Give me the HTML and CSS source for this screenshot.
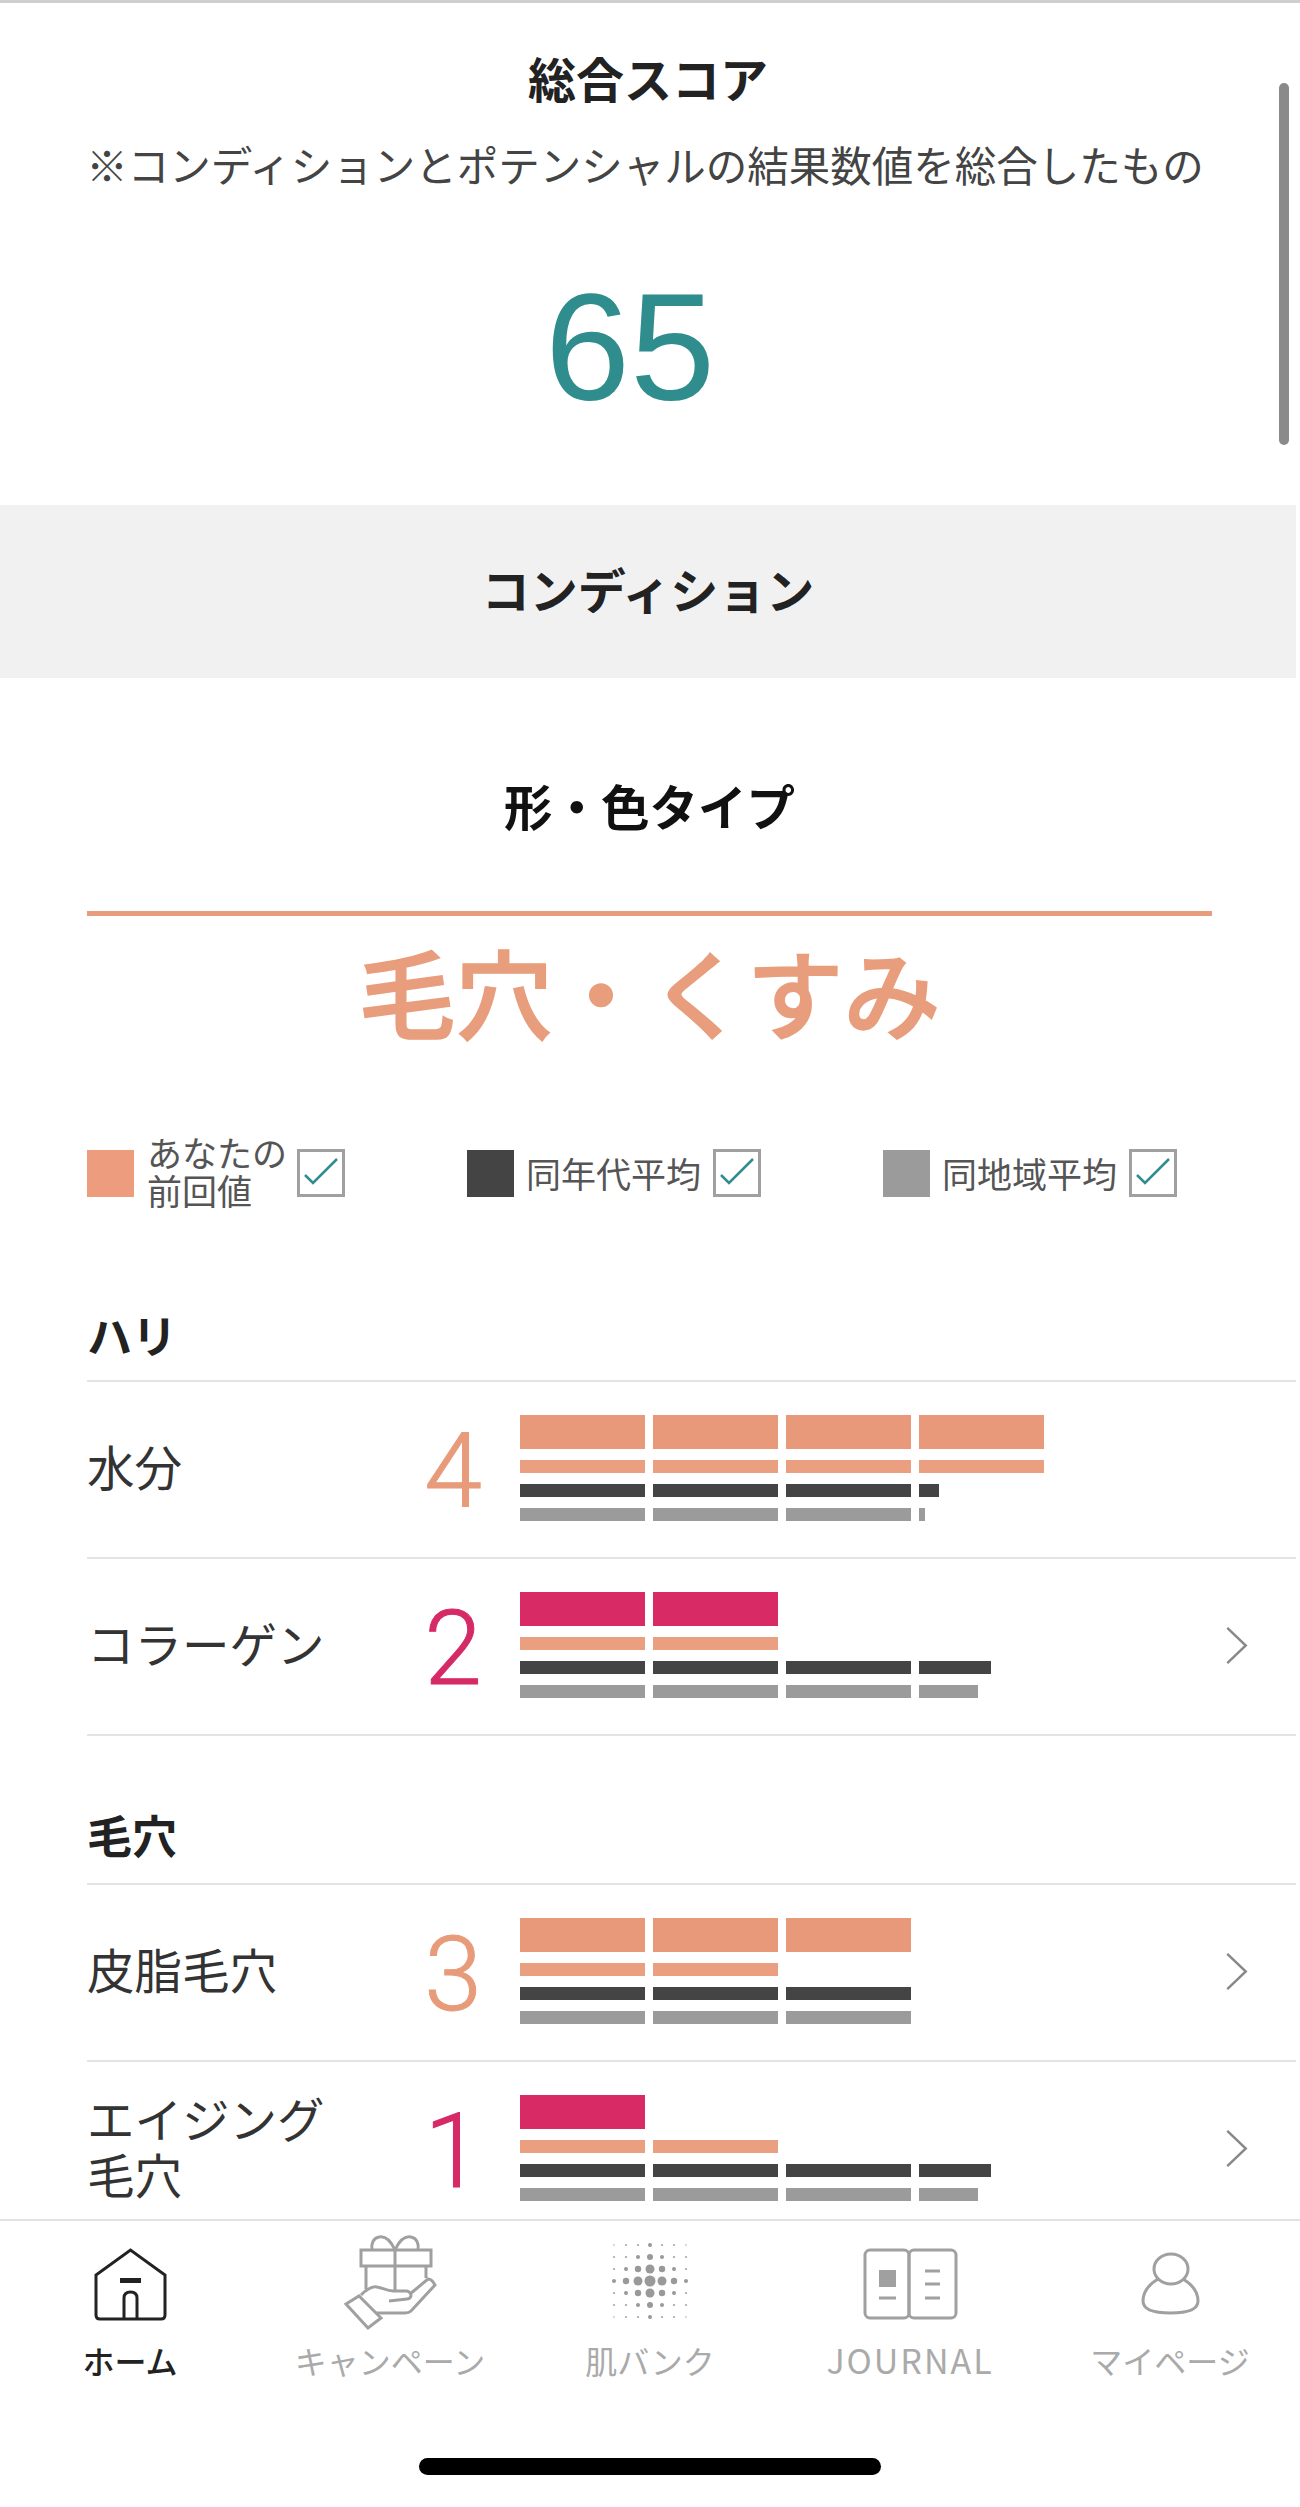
FILE: index.html
```html
<!DOCTYPE html>
<html lang="ja">
<head>
<meta charset="utf-8">
<title>総合スコア</title>
<link rel="stylesheet" href="styles.css">
</head>
<body>
<div class="page">
  <main class="main">
    <section class="score">
      <h1 class="score-title">総合スコア</h1>
      <p class="score-note">※コンディションとポテンシャルの結果数値を総合したもの</p>
      <div class="score-value">65</div>
    </section>
    <h2 class="band">コンディション</h2>
    <section class="type">
      <h3 class="type-label">形・色タイプ</h3>
      <div class="type-name">毛穴・くすみ</div>
      <div class="legend">
        <div class="legend-item">
          <span class="swatch peach"></span>
          <span class="legend-text legend-text-short">あなたの<br>前回値</span>
          <span class="check"><svg viewBox="0 0 42 42"><path d="M5 23 L13 31 L37 7"/></svg></span>
        </div>
        <div class="legend-item">
          <span class="swatch dark"></span>
          <span class="legend-text">同年代平均</span>
          <span class="check"><svg viewBox="0 0 42 42"><path d="M5 23 L13 31 L37 7"/></svg></span>
        </div>
        <div class="legend-item">
          <span class="swatch grey"></span>
          <span class="legend-text">同地域平均</span>
          <span class="check"><svg viewBox="0 0 42 42"><path d="M5 23 L13 31 L37 7"/></svg></span>
        </div>
      </div>
    </section>

    <section class="group group-hari">
      <h4 class="group-title">ハリ</h4>
      <div class="row">
        <div class="row-label">水分</div>
        <div class="row-num peach-text">4</div>
        <div class="bars">
          <div class="bar big peach"><i></i><i></i><i></i><i></i></div>
          <div class="bar peach"><i></i><i></i><i></i><i></i></div>
          <div class="bar dark"><i></i><i></i><i></i><i style="width:20px"></i></div>
          <div class="bar grey"><i></i><i></i><i></i><i style="width:6px"></i></div>
        </div>
      </div>
      <div class="row">
        <div class="row-label">コラーゲン</div>
        <div class="row-num pink-text">2</div>
        <div class="bars">
          <div class="bar big pink"><i></i><i></i></div>
          <div class="bar peach"><i></i><i></i></div>
          <div class="bar dark"><i></i><i></i><i></i><i style="width:72px"></i></div>
          <div class="bar grey"><i></i><i></i><i></i><i style="width:59px"></i></div>
        </div>
        <svg class="chevron" viewBox="0 0 24 38"><path d="M2 1 L21 19 L2 37"/></svg>
      </div>
    </section>

    <section class="group group-keana">
      <h4 class="group-title">毛穴</h4>
      <div class="row">
        <div class="row-label">皮脂毛穴</div>
        <div class="row-num peach-text">3</div>
        <div class="bars">
          <div class="bar big peach"><i></i><i></i><i></i></div>
          <div class="bar peach"><i></i><i></i></div>
          <div class="bar dark"><i></i><i></i><i></i></div>
          <div class="bar grey"><i></i><i></i><i></i></div>
        </div>
        <svg class="chevron" viewBox="0 0 24 38"><path d="M2 1 L21 19 L2 37"/></svg>
      </div>
      <div class="row row-last">
        <div class="row-label">エイジング<br>毛穴</div>
        <div class="row-num pink-text">1</div>
        <div class="bars">
          <div class="bar big pink"><i></i></div>
          <div class="bar peach"><i></i><i></i></div>
          <div class="bar dark"><i></i><i></i><i></i><i style="width:72px"></i></div>
          <div class="bar grey"><i></i><i></i><i></i><i style="width:59px"></i></div>
        </div>
        <svg class="chevron" viewBox="0 0 24 38"><path d="M2 1 L21 19 L2 37"/></svg>
      </div>
    </section>
  </main>

  <nav class="nav">
    <div class="tabs">
      <div class="tab active">
        <svg class="tab-icon" viewBox="0 0 100 100">
          <path d="M20 88 Q16 88 16 84 V44 L50.5 19 L85 44 V84 Q85 88 81 88 Z"/>
          <path class="solid" d="M40 47 H61 V52 H40 Z"/>
          <path d="M44 88 V67 Q44 61 50.5 61 Q57 61 57 67 V88"/>
        </svg>
        <span class="tab-label">ホーム</span>
      </div>
      <div class="tab">
        <svg class="tab-icon" viewBox="0 0 100 100">
          <path d="M55 19 C50 8 44 5 39 6 C33 7 31 13 32 19"/>
          <path d="M55 19 C60 8 66 5 71 6 C77 7 79 13 78 19"/>
          <path d="M21 19 H91 V35 H21 Z"/>
          <path d="M26 35 V58 M86 35 V47 M55 19 V60"/>
          <path d="M6 73 L19 65 L41 87 L28 97 Z"/>
          <path d="M21 64 C27 58 32 55 37 56 C43 57 47 60 53 60 L67 60 Q71 61 71 65 Q70 68 67 68 L49 70"/>
          <path d="M70 63 L88 48 Q92 48 95 54 L71 80 Q69 82 65 82 L36 82"/>
        </svg>
        <span class="tab-label">キャンペーン</span>
      </div>
      <div class="tab">
        <svg class="tab-icon halftone" viewBox="0 0 100 100">
          <g>
            <circle cx="14" cy="14" r="0.7"/><circle cx="26" cy="14" r="0.9"/><circle cx="38" cy="14" r="1"/><circle cx="50" cy="14" r="2"/><circle cx="62" cy="14" r="1"/><circle cx="74" cy="14" r="0.9"/><circle cx="86" cy="14" r="0.7"/>
            <circle cx="14" cy="26" r="0.9"/><circle cx="26" cy="26" r="1"/><circle cx="38" cy="26" r="2"/><circle cx="50" cy="26" r="3"/><circle cx="62" cy="26" r="2"/><circle cx="74" cy="26" r="1"/><circle cx="86" cy="26" r="0.9"/>
            <circle cx="14" cy="38" r="1"/><circle cx="26" cy="38" r="2"/><circle cx="38" cy="38" r="3.2"/><circle cx="50" cy="38" r="4.5"/><circle cx="62" cy="38" r="3.2"/><circle cx="74" cy="38" r="2"/><circle cx="86" cy="38" r="1"/>
            <circle cx="14" cy="50" r="2"/><circle cx="26" cy="50" r="3.2"/><circle cx="38" cy="50" r="4.5"/><circle cx="50" cy="50" r="5.5"/><circle cx="62" cy="50" r="4.5"/><circle cx="74" cy="50" r="3.2"/><circle cx="86" cy="50" r="2"/>
            <circle cx="14" cy="62" r="1"/><circle cx="26" cy="62" r="2"/><circle cx="38" cy="62" r="3.2"/><circle cx="50" cy="62" r="4.5"/><circle cx="62" cy="62" r="3.2"/><circle cx="74" cy="62" r="2"/><circle cx="86" cy="62" r="1"/>
            <circle cx="14" cy="74" r="0.9"/><circle cx="26" cy="74" r="1"/><circle cx="38" cy="74" r="2"/><circle cx="50" cy="74" r="3"/><circle cx="62" cy="74" r="2"/><circle cx="74" cy="74" r="1"/><circle cx="86" cy="74" r="0.9"/>
            <circle cx="14" cy="86" r="0.7"/><circle cx="26" cy="86" r="0.9"/><circle cx="38" cy="86" r="1"/><circle cx="50" cy="86" r="2"/><circle cx="62" cy="86" r="1"/><circle cx="74" cy="86" r="0.9"/><circle cx="86" cy="86" r="0.7"/>
          </g>
        </svg>
        <span class="tab-label">肌バンク</span>
      </div>
      <div class="tab">
        <svg class="tab-icon" viewBox="0 0 100 100">
          <rect x="5" y="19" width="44" height="68" rx="5"/>
          <rect x="49" y="19" width="47" height="68" rx="5"/>
          <path class="solid" d="M19 39 H36 V56 H19 Z"/>
          <path d="M19 67 H36 M65 40 H80 M65 53 H80 M65 67 H80"/>
        </svg>
        <span class="tab-label tab-label-latin">JOURNAL</span>
      </div>
      <div class="tab">
        <svg class="tab-icon" viewBox="0 0 100 100">
          <ellipse cx="51" cy="38" rx="17" ry="15"/>
          <path d="M38 48 C28 54 23 62 23 70 C23 79 36 82 50.5 82 C65 82 78 79 78 70 C78 62 73 54 63 48"/>
        </svg>
        <span class="tab-label">マイページ</span>
      </div>
    </div>
    <div class="home-indicator"></div>
  </nav>
  <div class="scrollbar"></div>
</div>
</body>
</html>
```

FILE: styles.css
```css
* { box-sizing: border-box; }

html, body {
  margin: 0;
  padding: 0;
  background: #fff;
}

body {
  font-family: "Noto Sans CJK JP", "Noto Sans", sans-serif;
  color: #222;
}

.page {
  position: relative;
  width: 1300px;
  height: 2507px;
  display: flex;
  flex-direction: column;
  overflow: hidden;
}

.main {
  flex: 1;
  min-height: 0;
  overflow: hidden;
  border-top: 3px solid #cfcfcf;
  padding-right: 4px;
}

/* score */
.score {
  height: 502px;
  text-align: center;
  padding-top: 44px;
}

.score-title {
  margin: 0;
  font-size: 48px;
  line-height: 60px;
  font-weight: 700;
  color: #222;
}

.score-note {
  margin: 27px 0 0;
  padding-right: 6px;
  font-size: 41.5px;
  line-height: 60px;
  color: #444;
  white-space: nowrap;
}

.score-value {
  margin-top: 63px;
  padding-right: 36px;
  font-family: "Liberation Sans", Arial, sans-serif;
  font-size: 153px;
  line-height: 180px;
  color: #2f8d8d;
}

/* band */
.band {
  margin: 0;
  height: 173px;
  padding-bottom: 8px;
  display: flex;
  align-items: center;
  justify-content: center;
  background: #f1f1f1;
  font-size: 48px;
  font-weight: 700;
  color: #222;
}

/* type */
.type {
  padding: 0 84px 0 87px;
}

.type-label {
  margin: 0;
  padding-top: 92px;
  height: 238px;
  border-bottom: 5px solid #e99c7c;
  text-align: center;
  font-size: 48.5px;
  line-height: 70px;
  font-weight: 700;
  color: #111;
}

.type-name {
  margin-top: 9px;
  text-align: center;
  font-size: 97px;
  line-height: 130px;
  font-weight: 500;
  -webkit-text-stroke: 1.5px #e89d7c;
  color: #e89d7c;
}

.legend {
  margin-top: 94px;
  width: 1090px;
  display: flex;
  justify-content: space-between;
  align-items: center;
}

.legend-item {
  display: flex;
  align-items: center;
  height: 48px;
}

.swatch {
  width: 47px;
  height: 47px;
  flex: none;
}

.swatch.peach { background: #ed9d7d; }
.swatch.dark { background: #444; }
.swatch.grey { background: #9b9b9b; }

.legend-text {
  margin-left: 12px;
  width: 187px;
  font-size: 35px;
  line-height: 38px;
  color: #555;
  white-space: nowrap;
}

.legend-text-short {
  margin-left: 13px;
  margin-top: -5px;
  width: 150px;
}

.check {
  flex: none;
  width: 48px;
  height: 48px;
  border: 3px solid #a0a0a0;
  background: #fff;
}

.check svg {
  display: block;
  width: 42px;
  height: 42px;
  fill: none;
  stroke: #2f8d8d;
  stroke-width: 2.5;
}

/* groups */
.group {
  margin-left: 87px;
}

.group-hari { margin-top: 100px; }
.group-keana { margin-top: 0; }

.group-title {
  margin: 0;
  height: 85px;
  padding-top: 8px;
  border-bottom: 2px solid #e4e4e4;
  font-size: 45px;
  line-height: 60px;
  font-weight: 700;
  color: #222;
}

.group-keana .group-title {
  height: 149px;
  padding-top: 69px;
}

.row {
  height: 177px;
  padding-top: 33px;
  border-bottom: 2px solid #e4e4e4;
  display: flex;
  align-items: flex-start;
}

.row-last { border-bottom: 0; }

.row-label {
  width: 327px;
  height: 107px;
  margin-top: -3px;
  display: flex;
  align-items: center;
  font-size: 47.5px;
  line-height: 56px;
  color: #333;
}

.row-num {
  width: 78px;
  margin-top: -11px;
  height: 120px;
  text-align: center;
  font-family: Roboto, sans-serif;
  font-weight: 300;
  font-size: 104px;
  line-height: 136px;
  -webkit-text-stroke: 1px currentColor;
}

.peach-text { color: #e89b7a; }
.pink-text { color: #d52a66; }

.bars {
  margin-left: 28px;
  width: 640px;
  display: flex;
  flex-direction: column;
  gap: 11px;
}

.bar {
  display: flex;
  gap: 8px;
  height: 13px;
}

.bar.big { height: 34px; }

.bar i {
  display: block;
  width: 125px;
  height: 100%;
}

.bar.peach i { background: #ea9f80; }
.bar.big.peach i { background: #e8997a; }
.bar.pink i { background: #d82a64; }
.bar.dark i { background: #444; }
.bar.grey i { background: #9b9b9b; }

.chevron {
  margin-left: 65px;
  margin-top: 35px;
  width: 24px;
  height: 37px;
  fill: none;
  stroke: #888;
  stroke-width: 2.5;
}

/* nav */
.nav {
  flex: none;
  height: 288px;
  border-top: 2px solid #e2e2e2;
  background: #fff;
  display: flex;
  flex-direction: column;
  align-items: center;
}

.tabs {
  width: 100%;
  display: grid;
  grid-template-columns: repeat(5, 1fr);
  padding-top: 10px;
}

.tab {
  display: flex;
  flex-direction: column;
  align-items: center;
  color: #aaa;
}

.tab.active { color: #222; }

.tab-icon {
  width: 100px;
  height: 100px;
  fill: none;
  stroke: #a0a0a0;
  stroke-width: 3;
}

.tab-icon .solid {
  fill: #a0a0a0;
  stroke: none;
}

.tab.active .tab-icon { stroke: #222; }
.tab.active .tab-icon .solid { fill: #222; }

.halftone {
  stroke: none;
  fill: #999;
}

.tab-label {
  margin-top: 7px;
  font-size: 32px;
  line-height: 44px;
  font-weight: 400;
  white-space: nowrap;
}

.tab-label-latin {
  font-size: 34px;
  letter-spacing: 2px;
}

.tab.active .tab-label {
  font-weight: 500;
}

.home-indicator {
  margin-top: 76px;
  width: 462px;
  height: 17px;
  border-radius: 9px;
  background: #000;
}

.scrollbar {
  position: absolute;
  top: 83px;
  right: 11px;
  width: 10px;
  height: 362px;
  border-radius: 5px;
  background: #8a8a8a;
}
```
